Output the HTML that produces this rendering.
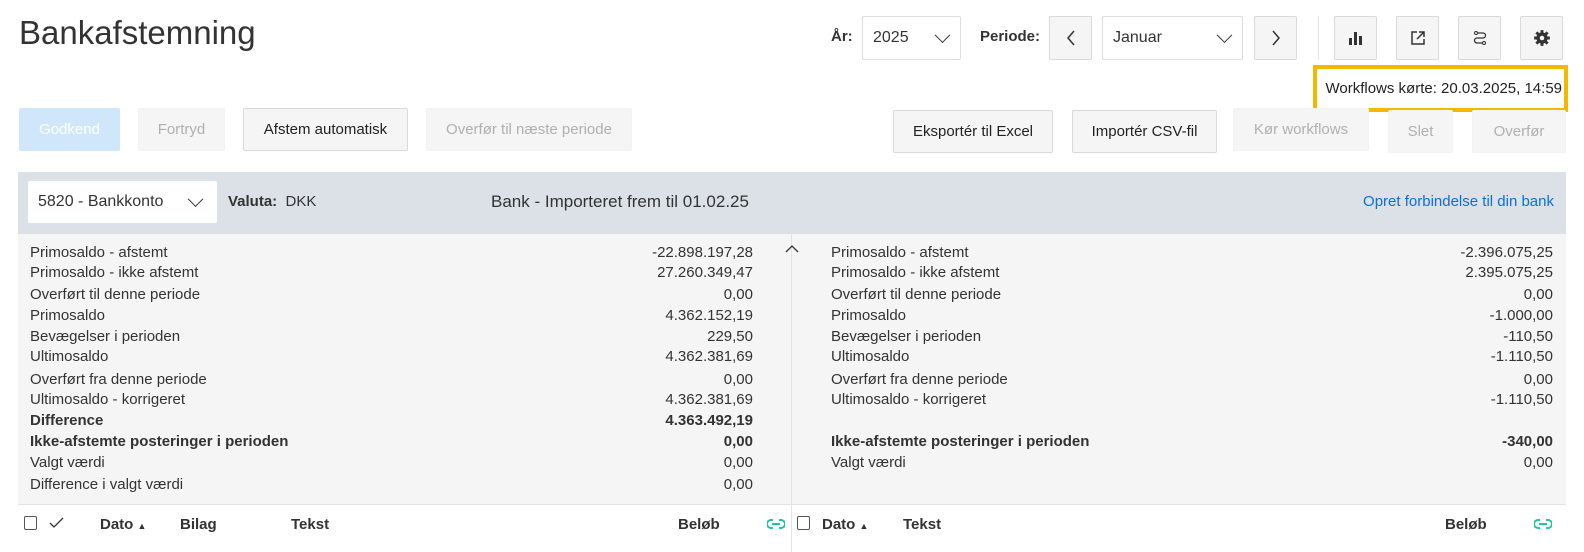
<!DOCTYPE html><html><head><meta charset="utf-8"><style>
*{box-sizing:border-box;margin:0;padding:0}
body{width:1584px;height:552px;background:#fff;font-family:"Liberation Sans",sans-serif;color:#333;position:relative;overflow:hidden;font-size:15px}
.a{position:absolute}
.btn{position:absolute;display:flex;align-items:center;justify-content:center;border:1px solid #d9d9d9;background:#f5f5f5;border-radius:2px;font-size:15px;color:#222}
.dis{color:#b0b0b0;border-color:#f2f2f2}
.sel{position:absolute;border:1px solid #ddd;border-radius:2px;background:#fff;display:flex;align-items:center;padding-left:10px;font-size:16px}
.chev{position:absolute;right:12px;top:50%;width:11px;height:11px;border-right:1.5px solid #333;border-bottom:1.5px solid #333;transform:translateY(-75%) rotate(45deg)}
.row{position:absolute;height:20px;font-size:15px;line-height:20px}
.b{font-weight:bold}
</style></head><body>
<div class="a" style="left:19px;top:14px;font-size:33px;color:#333">Bankafstemning</div>
<div class="a b" style="left:831px;top:28px;font-size:15px">År:</div>
<div class="sel" style="left:862px;top:16px;width:99px;height:44px">2025<span class="chev"></span></div>
<div class="a b" style="left:980px;top:28px;font-size:15px">Periode:</div>
<div class="btn" style="left:1049px;top:16px;width:43px;height:44px"><svg width="12" height="18"><path d="M9 2L3 9l6 7" fill="none" stroke="#333" stroke-width="1.5"/></svg></div>
<div class="sel" style="left:1102px;top:16px;width:141px;height:44px">Januar<span class="chev"></span></div>
<div class="btn" style="left:1254px;top:16px;width:43px;height:44px"><svg width="12" height="18"><path d="M3 2l6 7-6 7" fill="none" stroke="#333" stroke-width="1.5"/></svg></div>
<div class="a" style="left:1318px;top:16px;width:1px;height:44px;background:#e5e5e5"></div>
<div class="btn" style="left:1334px;top:16px;width:43px;height:44px"><svg width="16" height="16"><rect x="1" y="8" width="3" height="7" fill="#333"/><rect x="6" y="2" width="3" height="13" fill="#333"/><rect x="11" y="6" width="3" height="9" fill="#333"/></svg></div>
<div class="btn" style="left:1396px;top:16px;width:43px;height:44px"><svg width="16" height="16"><path d="M7 2H2v12h12V9M9 2h5v5M14 2L7 9" fill="none" stroke="#333" stroke-width="1.5"/></svg></div>
<div class="btn" style="left:1458px;top:16px;width:43px;height:44px"><svg width="16" height="16"><circle cx="4" cy="3" r="1.5" fill="none" stroke="#333"/><circle cx="12" cy="13" r="1.5" fill="none" stroke="#333"/><path d="M5.5 3H11a2.5 2.5 0 0 1 0 5H5a2.5 2.5 0 0 0 0 5h5.5" fill="none" stroke="#333" stroke-width="1.3"/></svg></div>
<div class="btn" style="left:1520px;top:16px;width:43px;height:44px"><svg width="18" height="18" viewBox="0 0 16 16"><circle cx="8" cy="8" r="5" fill="#333"/><g stroke="#333" stroke-width="2.6"><path d="M8 1v14M1 8h14M3 3l10 10M13 3L3 13"/></g><circle cx="8" cy="8" r="2" fill="#f5f5f5"/></svg></div>
<div class="a" style="left:1313px;top:65px;width:255px;height:47px;border:4px solid #f5b800;background:#fff;display:flex;align-items:center;justify-content:flex-end;padding-right:2px;font-size:15px;color:#222">Workflows kørte: 20.03.2025, 14:59</div>
<div class="btn" style="left:19px;top:108px;width:101px;height:43px;background:#cfe6fb;border-color:#cfe6fb;color:#fff">Godkend</div>
<div class="btn dis" style="left:138px;top:108px;width:87px;height:43px">Fortryd</div>
<div class="btn" style="left:243px;top:108px;width:165px;height:43px">Afstem automatisk</div>
<div class="btn dis" style="left:426px;top:108px;width:206px;height:43px">Overfør til næste periode</div>
<div class="btn" style="left:893px;top:110px;width:160px;height:43px">Eksportér til Excel</div>
<div class="btn" style="left:1072px;top:110px;width:145px;height:43px">Importér CSV-fil</div>
<div class="btn dis" style="left:1233px;top:108px;width:136px;height:43px">Kør workflows</div>
<div class="btn dis" style="left:1388px;top:110px;width:65px;height:43px">Slet</div>
<div class="btn dis" style="left:1472px;top:110px;width:94px;height:43px">Overfør</div>
<div class="a" style="left:18px;top:172px;width:1548px;height:62px;background:#dbe1e7"></div>
<div class="sel" style="left:28px;top:181px;width:189px;height:42px;border:none;font-size:16px">5820 - Bankkonto<span class="chev" style="right:16px"></span></div>
<div class="a" style="left:228px;top:193px;font-size:15px"><b>Valuta:</b>&nbsp; DKK</div>
<div class="a" style="left:491px;top:192px;font-size:17px">Bank - Importeret frem til 01.02.25</div>
<div class="a" style="right:30px;top:193px;font-size:15px;color:#0b6fd8">Opret forbindelse til din bank</div>
<div class="a" style="left:18px;top:234px;width:1548px;height:270px;background:#f5f5f5"></div>
<div class="a" style="left:791px;top:234px;width:1px;height:318px;background:#e3e3e3"></div>
<div class="a" style="left:18px;top:504px;width:1548px;height:1px;background:#e3e3e3"></div>
<svg class="a" style="left:784px;top:244px" width="16" height="10"><path d="M2 8l6-6 6 6" fill="none" stroke="#333" stroke-width="1.3"/></svg>
<div id="L"></div>
<script>
var L=[["Primosaldo - afstemt","-22.898.197,28",252],["Primosaldo - ikke afstemt","27.260.349,47",272],["Overført til denne periode","0,00",294],["Primosaldo","4.362.152,19",315],["Bevægelser i perioden","229,50",336],["Ultimosaldo","4.362.381,69",356],["Overført fra denne periode","0,00",379],["Ultimosaldo - korrigeret","4.362.381,69",399],["Difference","4.363.492,19",420,1],["Ikke-afstemte posteringer i perioden","0,00",441,1],["Valgt værdi","0,00",462],["Difference i valgt værdi","0,00",484]];
var R=[["Primosaldo - afstemt","-2.396.075,25",252],["Primosaldo - ikke afstemt","2.395.075,25",272],["Overført til denne periode","0,00",294],["Primosaldo","-1.000,00",315],["Bevægelser i perioden","-110,50",336],["Ultimosaldo","-1.110,50",356],["Overført fra denne periode","0,00",379],["Ultimosaldo - korrigeret","-1.110,50",399],["Ikke-afstemte posteringer i perioden","-340,00",441,1],["Valgt værdi","0,00",462]];
var h="";
function add(a,x,r){a.forEach(function(e){var c=e[3]?' b':'';h+='<div class="row'+c+'" style="left:'+x+'px;top:'+(e[2]-9)+'px">'+e[0]+'</div><div class="row'+c+'" style="right:'+r+'px;top:'+(e[2]-9)+'px">'+e[1]+'</div>';});}
add(L,30,1584-753);add(R,831,1584-1553);
document.getElementById("L").innerHTML=h;
</script>
<div class="a" style="left:24px;top:516px;width:13px;height:14px;border:1px solid #555;border-radius:2px;background:#fff"></div>
<svg class="a" style="left:49px;top:517px" width="16" height="12"><path d="M1 6l4 4 9-9" fill="none" stroke="#333" stroke-width="1.3"/></svg>
<div class="a b" style="left:100px;top:516px;font-size:15px">Dato <span style="font-size:9px">▲</span></div>
<div class="a b" style="left:180px;top:516px;font-size:15px">Bilag</div>
<div class="a b" style="left:291px;top:516px;font-size:15px">Tekst</div>
<div class="a b" style="left:678px;top:516px;font-size:15px">Beløb</div>
<svg class="a" style="left:767px;top:518px" width="18" height="12"><path d="M6 2H4a4 4 0 0 0 0 8h2M12 2h2a4 4 0 0 1 0 8h-2M5 6h8" fill="none" stroke="#1ec8a0" stroke-width="2"/></svg>
<div class="a" style="left:797px;top:516px;width:13px;height:14px;border:1px solid #555;border-radius:2px;background:#fff"></div>
<div class="a b" style="left:822px;top:516px;font-size:15px">Dato <span style="font-size:9px">▲</span></div>
<div class="a b" style="left:903px;top:516px;font-size:15px">Tekst</div>
<div class="a b" style="left:1445px;top:516px;font-size:15px">Beløb</div>
<svg class="a" style="left:1534px;top:518px" width="18" height="12"><path d="M6 2H4a4 4 0 0 0 0 8h2M12 2h2a4 4 0 0 1 0 8h-2M5 6h8" fill="none" stroke="#1ec8a0" stroke-width="2"/></svg>
</body></html>
